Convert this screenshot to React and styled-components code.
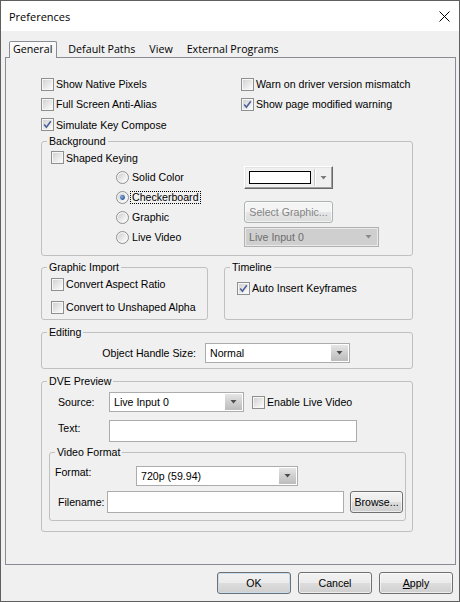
import React from "react";
import styled, { createGlobalStyle, css } from "styled-components";

const UI = '"Liberation Sans", Arial, sans-serif';
const SEGOE = '"Open Sans", "Noto Sans", sans-serif';

const GlobalStyle = createGlobalStyle`
  html, body { margin: 0; padding: 0; background: #f0f0f0; }
  * { box-sizing: border-box; }
`;

const Window = styled.div`
  width: 460px;
  height: 602px;
  border: 1px solid #5f5f5f;
  display: flex;
  flex-direction: column;
  background: #f0f0f0;
  font-family: ${UI};
  font-size: 10.6px;
  color: #000;
  overflow: hidden;
`;

const TitleBar = styled.div`
  height: 30px;
  flex: none;
  background: #fff;
  display: flex;
  align-items: center;
  justify-content: space-between;
  padding: 0 9px 0 8px;
`;

const Title = styled.span`
  font-family: ${SEGOE};
  font-size: 11px;
`;

const Body = styled.div`
  flex: 1;
  display: flex;
  flex-direction: column;
  padding: 10px 3px 0 4px;
`;

const TabStrip = styled.div`
  display: flex;
  align-items: flex-end;
  height: 16px;
  padding-left: 4px;
  position: relative;
  z-index: 1;
`;

const Tab = styled.div`
  font-family: ${SEGOE};
  font-size: 10.7px;
  line-height: 14px;
  padding: 0 7px 1px;
  white-space: nowrap;
  ${(p) =>
    p.$active &&
    css`
      height: 17px;
      margin-bottom: -1px;
      margin-right: 4px;
      padding: 0 4px 0 3px;
      background: linear-gradient(#fbfbfb, #f0f0f0);
      border: 1px solid #898c95;
      border-bottom: none;
      border-radius: 2px 2px 0 0;
    `}
`;

const Panel = styled.div`
  height: 508px;
  flex: none;
  border: 1px solid #898c95;
  padding: 16px 42px 0 35px;
  display: flex;
  flex-direction: column;
`;

const TopGrid = styled.div`
  display: grid;
  grid-template-columns: 200px 1fr;
  grid-template-rows: 20px 20px 21px;
`;

const CheckRow = styled.label`
  display: flex;
  align-items: center;
  gap: 2px;
  height: ${(p) => p.$h || 20}px;
  white-space: nowrap;
`;

const Group = styled.fieldset`
  margin: ${(p) => p.$mt || 0}px 0 0;
  padding: 0;
  border: 1px solid #c0c0c0;
  border-radius: 3px;
  min-width: 0;
`;

const Legend = styled.legend`
  margin-left: 5px;
  padding: 0 2px;
  line-height: 13px;
`;

const GroupBody = styled.div`
  padding: ${(p) => p.$pad};
  display: flex;
  flex-direction: ${(p) => p.$dir || "column"};
  align-items: ${(p) => p.$align || "stretch"};
  gap: ${(p) => p.$gap || 0}px;
`;

const OptionArea = styled.div`
  display: flex;
  align-items: flex-start;
`;

const RadioCol = styled.div`
  margin-left: 65px;
  width: 128px;
  display: flex;
  flex-direction: column;
`;

const RadioRow = styled.label`
  display: flex;
  align-items: center;
  gap: 2px;
  height: 20px;
  white-space: nowrap;
`;

const RadioText = styled.span`
  padding: 0 1px;
  margin-left: -1px;
  line-height: 11px;
  border: 1px dotted ${(p) => (p.$focus ? "#000" : "transparent")};
`;

const ControlCol = styled.div`
  display: flex;
  flex-direction: column;
  align-items: flex-start;
`;

const ColorButton = styled.div`
  width: 89px;
  height: 23px;
  margin-top: -1px;
  display: flex;
  border: 1px solid;
  border-color: #ffffff #696969 #696969 #ffffff;
  box-shadow: inset -1px -1px 0 #a0a0a0, inset 1px 1px 0 #e3e3e3;
  background: #f0f0f0;
`;

const SwatchWell = styled.div`
  flex: 1;
  padding: 4px;
  display: flex;
`;

const Swatch = styled.div`
  flex: 1;
  background: #fff;
  border: 1px solid #000;
`;

const ColorArrow = styled.div`
  width: 16px;
  display: flex;
  align-items: center;
  justify-content: center;
  border-left: 1px solid #ffffff;
  box-shadow: -1px 0 0 #c8c8c8;
  margin: 2px 1px 2px 0;
`;

const PushButton = styled.div`
  width: ${(p) => p.$w}px;
  height: 22px;
  margin-top: ${(p) => p.$mt || 0}px;
  margin-left: ${(p) => p.$ml || 0}px;
  flex: none;
  display: flex;
  align-items: center;
  justify-content: center;
  border: 1px solid ${(p) => (p.$disabled ? "#adb2b5" : "#707070")};
  border-radius: 3px;
  color: ${(p) => (p.$disabled ? "#838383" : "#000")};
  background: ${(p) =>
    p.$disabled
      ? "linear-gradient(#f4f4f4, #f4f4f4 50%, #e6e6e6 50%, #dddddd)"
      : "linear-gradient(#f2f2f2, #ebebeb 50%, #dddddd 50%, #cfcfcf)"};
  box-shadow: inset 0 0 0 1px ${(p) => (p.$default ? "#c6dcef" : "rgba(255,255,255,0.6)")};
  white-space: nowrap;
`;

const ComboBox = styled.div`
  width: ${(p) => p.$w}px;
  height: 20px;
  margin-top: ${(p) => p.$mt || 0}px;
  flex: none;
  display: flex;
  border: 1px solid ${(p) => (p.$disabled ? "#b1b1b1" : "#acacac")};
  background: ${(p) => (p.$disabled ? "#cfcfcf" : "#fff")};
  color: ${(p) => (p.$disabled ? "#6d6d6d" : "#000")};
  box-shadow: ${(p) => (p.$disabled ? "inset 0 0 0 1px #e9e9e9" : "none")};
`;

const ComboText = styled.div`
  flex: 1;
  display: flex;
  align-items: center;
  padding-left: 4px;
  white-space: nowrap;
  overflow: hidden;
`;

const ComboArrow = styled.div`
  width: 17px;
  margin: 1px;
  display: flex;
  align-items: center;
  justify-content: center;
  background: ${(p) =>
    p.$disabled ? "transparent" : "linear-gradient(#e6e6e6, #cfcfcf 50%, #bcbcbc)"};
`;

const TextBox = styled.div`
  width: ${(p) => p.$w}px;
  height: 22px;
  flex: none;
  background: #fff;
  border: 1px solid #acacac;
`;

const EditRow = styled.div`
  display: flex;
  align-items: ${(p) => p.$align || "center"};
  margin-top: ${(p) => p.$mt || 0}px;
  margin-left: ${(p) => p.$ml || 0}px;
`;

const FieldLabel = styled.span`
  width: ${(p) => p.$w}px;
  flex: none;
  text-align: ${(p) => (p.$right ? "right" : "left")};
  padding-top: ${(p) => p.$pt || 0}px;
  margin-right: ${(p) => p.$mr || 0}px;
  white-space: nowrap;
`;

const Spaced = styled.div`
  margin-left: ${(p) => p.$ml}px;
`;

const ButtonBar = styled.div`
  display: flex;
  justify-content: flex-end;
  gap: 7px;
  margin-top: 7px;
  padding-right: 3px;
`;

const Mnemonic = styled.span`
  text-decoration: underline;
`;

const Icon = styled.svg`
  flex: none;
  display: block;
`;

const Check = ({ checked }) => (
  <Icon width="13" height="13" viewBox="0 0 13 13">
    <defs>
      <linearGradient id="cbFill" x1="0" y1="0" x2="1" y2="1">
        <stop offset="0" stopColor="#d2d2d2" />
        <stop offset="1" stopColor="#fbfbfb" />
      </linearGradient>
    </defs>
    <rect x="0.5" y="0.5" width="12" height="12" fill="#f6f6f6" stroke="#8e8f8f" />
    <rect x="2" y="2" width="9" height="9" fill="url(#cbFill)" />
    {checked && (
      <path d="M3.2 6.5 L5.4 9.2 L9.8 3.2" fill="none" stroke="#4d6198" strokeWidth="1.6" />
    )}
  </Icon>
);

const Radio = ({ checked }) => (
  <Icon width="13" height="13" viewBox="0 0 13 13">
    <defs>
      <linearGradient id="rbFill" x1="0" y1="0" x2="1" y2="1">
        <stop offset="0" stopColor="#cfcfcf" />
        <stop offset="1" stopColor="#ffffff" />
      </linearGradient>
      <radialGradient id="rbDot" cx="0.4" cy="0.4" r="0.6">
        <stop offset="0" stopColor="#8bb3e6" />
        <stop offset="1" stopColor="#1d4e94" />
      </radialGradient>
    </defs>
    <circle cx="6.5" cy="6.5" r="6" fill="#f4f4f4" stroke="#8e8f8f" />
    <circle cx="6.5" cy="6.5" r="4.3" fill="url(#rbFill)" />
    {checked && <circle cx="6.5" cy="6.5" r="2.4" fill="url(#rbDot)" />}
  </Icon>
);

const DownTri = ({ color = "#4c4c4c" }) => (
  <Icon width="7" height="4" viewBox="0 0 7 4">
    <path d="M0.5 0 H6.5 L3.5 3.5 Z" fill={color} />
  </Icon>
);

const CloseIcon = () => (
  <Icon width="11" height="11" viewBox="0 0 11 11">
    <path d="M0.5 0.5 L10.5 10.5 M10.5 0.5 L0.5 10.5" stroke="#000" strokeWidth="1" />
  </Icon>
);

const Combo = ({ value, width, disabled, mt }) => (
  <ComboBox $w={width} $disabled={disabled} $mt={mt}>
    <ComboText>{value}</ComboText>
    <ComboArrow $disabled={disabled}>
      <DownTri color={disabled ? "#8a8a8a" : "#4c4c4c"} />
    </ComboArrow>
  </ComboBox>
);

const CheckOpt = ({ label, checked, h }) => (
  <CheckRow $h={h}>
    <Check checked={checked} />
    <span>{label}</span>
  </CheckRow>
);

const RadioOpt = ({ label, checked, focus }) => (
  <RadioRow>
    <Radio checked={checked} />
    <RadioText $focus={focus}>{label}</RadioText>
  </RadioRow>
);

export default function App() {
  return (
    <>
      <GlobalStyle />
      <Window>
        <TitleBar>
          <Title>Preferences</Title>
          <CloseIcon />
        </TitleBar>
        <Body>
          <TabStrip>
            <Tab $active>General</Tab>
            <Tab>Default Paths</Tab>
            <Tab>View</Tab>
            <Tab>External Programs</Tab>
          </TabStrip>
          <Panel>
            <TopGrid>
              <CheckOpt label="Show Native Pixels" />
              <CheckOpt label="Warn on driver version mismatch" />
              <CheckOpt label="Full Screen Anti-Alias" />
              <CheckOpt label="Show page modified warning" checked />
              <CheckOpt label="Simulate Key Compose" checked h={21} />
            </TopGrid>

            <Group>
              <Legend>Background</Legend>
              <GroupBody $pad="0 0 8px 9px">
                <CheckOpt label="Shaped Keying" h={19} />
                <OptionArea>
                  <RadioCol>
                    <RadioOpt label="Solid Color" />
                    <RadioOpt label="Checkerboard" checked focus />
                    <RadioOpt label="Graphic" />
                    <RadioOpt label="Live Video" />
                  </RadioCol>
                  <ControlCol>
                    <ColorButton>
                      <SwatchWell>
                        <Swatch />
                      </SwatchWell>
                      <ColorArrow>
                        <DownTri color="#7a7a7a" />
                      </ColorArrow>
                    </ColorButton>
                    <PushButton $w={89} $mt={12} $disabled>
                      Select Graphic...
                    </PushButton>
                    <Combo value="Live Input 0" width={135} disabled mt={4} />
                  </ControlCol>
                </OptionArea>
              </GroupBody>
            </Group>

            <EditRow $align="stretch" $mt={5}>
              <Group style={{ width: 167, flex: "none" }}>
                <Legend>Graphic Import</Legend>
                <GroupBody $pad="0 0 2px 9px" $gap={3}>
                  <CheckOpt label="Convert Aspect Ratio" />
                  <CheckOpt label="Convert to Unshaped Alpha" />
                </GroupBody>
              </Group>
              <Spaced $ml={16} style={{ flex: 1, display: "flex" }}>
                <Group style={{ flex: 1 }}>
                  <Legend>Timeline</Legend>
                  <GroupBody $pad="4px 0 0 12px">
                    <CheckOpt label="Auto Insert Keyframes" checked />
                  </GroupBody>
                </Group>
              </Spaced>
            </EditRow>

            <Group $mt={6}>
              <Legend>Editing</Legend>
              <GroupBody $pad="4px 0 5px 0" $dir="row" $align="center">
                <FieldLabel $w={154} $right $mr={9}>
                  Object Handle Size:
                </FieldLabel>
                <Combo value="Normal" width={145} />
              </GroupBody>
            </Group>

            <Group $mt={6}>
              <Legend>DVE Preview</Legend>
              <GroupBody $pad="4px 6px 10px 7px">
                <EditRow $ml={9}>
                  <FieldLabel $w={51}>Source:</FieldLabel>
                  <Combo value="Live Input 0" width={135} />
                  <Spaced $ml={8}>
                    <CheckOpt label="Enable Live Video" />
                  </Spaced>
                </EditRow>
                <EditRow $ml={9} $mt={8} $align="flex-start">
                  <FieldLabel $w={51} $pt={2}>
                    Text:
                  </FieldLabel>
                  <TextBox $w={248} />
                </EditRow>
                <Group $mt={4}>
                  <Legend>Video Format</Legend>
                  <GroupBody $pad="7px 0 7px 5px">
                    <EditRow $align="flex-start">
                      <FieldLabel $w={81}>Format:</FieldLabel>
                      <Combo value="720p (59.94)" width={162} />
                    </EditRow>
                    <EditRow $mt={5} $ml={3}>
                      <FieldLabel $w={49}>Filename:</FieldLabel>
                      <TextBox $w={237} />
                      <PushButton $w={53} $ml={6}>
                        Browse...
                      </PushButton>
                    </EditRow>
                  </GroupBody>
                </Group>
              </GroupBody>
            </Group>
          </Panel>
          <ButtonBar>
            <PushButton $w={74} $default>
              OK
            </PushButton>
            <PushButton $w={74}>Cancel</PushButton>
            <PushButton $w={74}>
              <span>
                <Mnemonic>A</Mnemonic>pply
              </span>
            </PushButton>
          </ButtonBar>
        </Body>
      </Window>
    </>
  );
}
